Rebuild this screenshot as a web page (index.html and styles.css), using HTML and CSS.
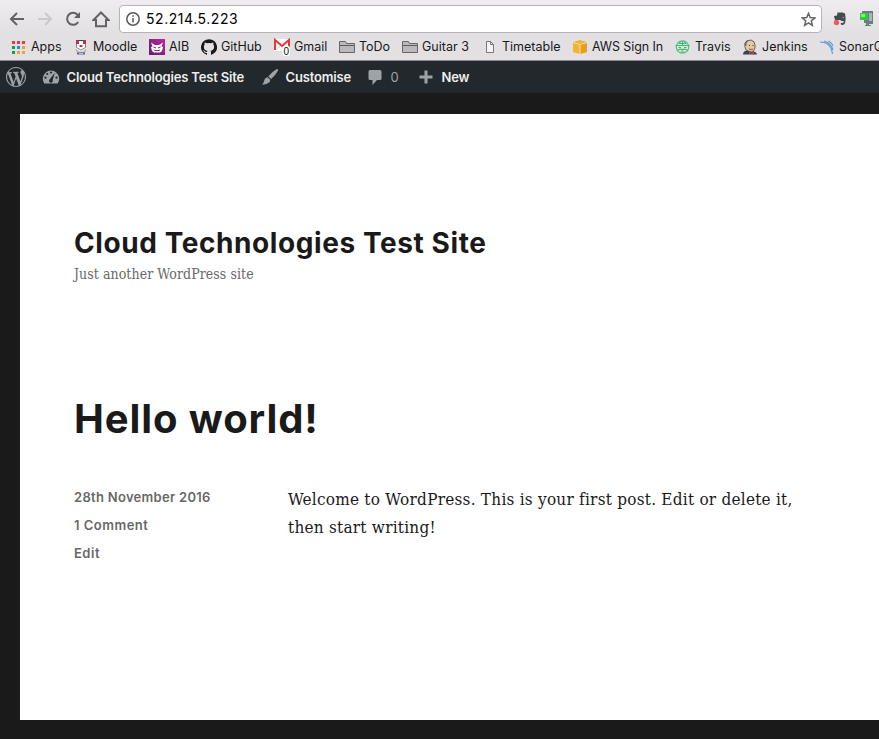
FILE: index.html
```html
<!DOCTYPE html>
<html lang="en">
<head>
<meta charset="utf-8">
<title>Cloud Technologies Test Site</title>
<link rel="stylesheet" href="styles.css">
</head>
<body>
<header class="browser">
  <div class="toolbar">
    <svg class="nav" viewBox="0 0 18 18"><path d="M16 9H3M9 3L3 9l6 6"/></svg>
    <svg class="nav nav-off" viewBox="0 0 18 18"><path d="M2 9h13M9 3l6 6-6 6"/></svg>
    <svg class="nav" viewBox="0 0 18 18"><path d="M14.2 12a6 6 0 1 1-.7-7.3L15 6.200"/><path class="solid" d="M16 2v6h-6z"/></svg>
    <svg class="nav" viewBox="0 0 18 18"><path d="M1.500 10L9 2.500l7.500 7.500H14v6.200H4V10z"/></svg>
    <div class="address">
      <svg class="info" viewBox="0 0 14 14"><circle cx="7" cy="7" r="6.200"/><path d="M7 6v4.500M7 3.300v1.500"/></svg>
      <span class="url">52.214.5.223</span>
      <svg class="star" viewBox="0 0 14 14"><path d="M7 1.200l1.600 4 4.300.3-3.300 2.800 1 4.200L7 10.200l-3.600 2.300 1-4.200L1.100 5.500l4.300-.3z"/></svg>
    </div>
    <svg class="ext" viewBox="0 0 16 16"><path fill="#414c50" d="M5.500 1.500h5l2.500 1q1 4 .3 8.500-.5 3.500-4 3l-.7-2 3-.3V10H9.500L8 9H3L2 5l3-.5z"/><path fill="#9ba2a4" d="M10.500 6h1.500v1h-1.500z"/><circle cx="4.500" cy="11.500" r="2.700" fill="#f05a5e"/></svg>
    <svg class="ext" viewBox="0 0 16 16"><path fill="#6c7e83" d="M4 0h11v13h-4v1h2v1H7v-1h1v-2H6V9H4z"/><path fill="#a7b5b7" d="M11 2h3v8h-3z"/><path fill="#36c83c" d="M2 2h8v7H2z"/><path fill="#8bea79" d="M3 3h4v3H3z"/></svg>
  </div>
  <nav class="bookmarks">
    <a><svg viewBox="0 0 16 16"><path fill="#ed3b3b" d="M1 2h3v3H1zM6 2h3v3H6zM11 2h3v3h-3z"/><path fill="#149c59" d="M1 7h3v3H1zM1 12h3v3H1z"/><path fill="#2a86ec" d="M6 7h3v3H6z"/><path fill="#f0a13a" d="M11 7h3v3h-3zM6 12h3v3H6zM11 12h3v3h-3z"/></svg><span>Apps</span></a>
    <a><svg viewBox="0 0 16 16"><path fill="#b93242" d="M3 1h10v4H3z"/><path fill="#243f75" d="M6 1h4v1H6z"/><path fill="#fff" d="M6 2h4v3H6zM3 5h10v4l-5 3-5-3z"/><path fill="none" stroke="#7c8796" d="M3.500 5v3.500L8 11l4.500-2.500V5"/><path fill="#b93242" d="M6.500 6h3v2h-3z"/><path fill="none" stroke="#b9a58c" stroke-width="1.300" d="M3 10.500l2 3h6l2-3"/><path fill="#586b98" d="M4 13.500h8v2H4z"/><path fill="#e4e6ee" d="M6 14h4v.7H6z"/></svg><span>Moodle</span></a>
    <a><svg viewBox="0 0 16 16"><defs><linearGradient id="aib" x2="1" y1="1"><stop stop-color="#5b206c"/><stop offset="1" stop-color="#c2259f"/></linearGradient></defs><path fill="url(#aib)" d="M0 0h16v16H0z"/><path fill="#fff" d="M2 3.500l4 2.500h4l4-2.500-1.500 4 1.500.5-1 4-2 1.500H5L3 12 2 8l1.500-.5z"/><path fill="none" stroke="#84217f" d="M4.500 8l2.500 1M11.500 8L9 9M5 11l2 .700h2l2-.7"/></svg><span>AIB</span></a>
    <a><svg viewBox="0 0 16 16"><path fill="#191717" d="M8 .2a8 8 0 0 0-2.500 15.600c.4.1.500-.2.500-.4v-1.500c-2.200.5-2.700-.9-2.700-.9-.4-.9-.9-1.200-.9-1.200-.7-.5.1-.5.1-.5.800.1 1.200.8 1.200.8.7 1.200 1.900.9 2.300.7.1-.5.300-.9.5-1.100-1.800-.2-3.600-.9-3.600-4 0-.9.300-1.600.8-2.100-.1-.2-.4-1 .1-2.100 0 0 .7-.2 2.200.8a7.700 7.700 0 0 1 4 0c1.500-1 2.200-.8 2.200-.8.4 1.100.2 1.900.1 2.100.5.6.8 1.300.8 2.100 0 3.100-1.900 3.800-3.700 4 .3.3.6.8.6 1.500v2.200c0 .2.100.5.6.4A8 8 0 0 0 8 .2z"/></svg><span>GitHub</span></a>
    <a><svg class="gmail" viewBox="0 0 16 16"><path fill="#fafafa" d="M0 0h16v12H0z"/><path fill="none" stroke="#d9bdbd" stroke-width=".7" d="M2 11l5-5M14 11L9 6"/><path fill="none" stroke="#e0393b" stroke-width="2" d="M1 11V1l7 6 7-6v10"/><rect x="8.500" y="7" width="7.500" height="10" rx="2" fill="#fff"/><text x="9.500" y="15.500" class="count">0</text></svg><span>Gmail</span></a>
    <a><svg viewBox="0 0 16 16"><path class="folder" d="M.5 13.500v-11h6l1 2h8v9z"/><path stroke="#5d5b5e" d="M1 6.500h14"/></svg><span>ToDo</span></a>
    <a><svg viewBox="0 0 16 16"><path class="folder" d="M.5 13.500v-11h6l1 2h8v9z"/><path stroke="#5d5b5e" d="M1 6.500h14"/></svg><span>Guitar 3</span></a>
    <a><svg viewBox="0 0 16 16"><path fill="#f5f4f5" stroke="#777" d="M4.500 2.500h4l3 3v8h-7zM8.500 2.500v3h3"/></svg><span>Timetable</span></a>
    <a><svg viewBox="0 0 16 16"><path fill="#f4b32c" d="M1 3l7-2 7 2v10l-7 2-7-2z"/><path fill="#e99d20" d="M8 5.500l7-2V13l-7 2z"/><path fill="none" stroke="#fbe3ad" d="M1 3.500l7 2 7-2M8 6v9"/></svg><span class="w-aws">AWS Sign In</span></a>
    <a><svg viewBox="0 0 16 16"><circle cx="7.500" cy="8" r="6.200" fill="#d5eadc" stroke="#5bbd86" stroke-width="1.200"/><path fill="none" stroke="#43b477" stroke-width="1.100" d="M.5 6.500h14M3.500 4.500h8M7.500 2v4M5 2.500v2M10 2.500v2M3.500 8.500H6M9 8.500h2.500M2.500 11.500q3-2.500 5-.5 2-2 5 .5M5.500 13h4"/></svg><span>Travis</span></a>
    <a><svg viewBox="0 0 16 16"><path fill="#2f4856" d="M1 15.500q0-4 5-4l6 1q3 1 3 3z"/><path fill="#e3c7a7" stroke="#4d4745" stroke-width=".8" d="M4 11Q2 7 3 4q2-3 6-3 4 1 4 5v3q-1 4-4 4z"/><path fill="#6e625b" d="M2.500 6Q3 1 7 1L4.500 4v3z"/><path fill="#443a36" d="M7 6h1v1H7zM10.500 6h1v1h-1z"/><path stroke="#594a43" stroke-width=".8" fill="none" d="M7 10q2 1 4 0"/><path fill="#d43835" d="M7 12.500l2 1 3-1v3l-3-1-2 1z"/></svg><span>Jenkins</span></a>
    <a><svg viewBox="0 0 16 16"><path fill="none" stroke="#5b9bd0" stroke-width="1.100" d="M1 3q11 0 12.500 12M5 2q7 2 9 9M9.500 2q3.500 2 4.500 5"/></svg><span>SonarQube</span></a>
  </nav>
</header>
<nav class="adminbar">
  <svg class="wp" viewBox="0 0 20 20"><path fill="#9ea3a8" d="M20 10c0-5.510-4.490-10-10-10C4.480 0 0 4.490 0 10c0 5.520 4.480 10 10 10 5.510 0 10-4.480 10-10zM7.780 15.370L4.370 6.220c.55-.02 1.170-.08 1.170-.08.500-.06.440-1.130-.06-1.110 0 0-1.450.11-2.370.11-.18 0-.37 0-.58-.01C4.120 2.690 6.870 1.110 10 1.110c2.330 0 4.450.87 6.050 2.340-.68-.11-1.650.39-1.650 1.580 0 .74.450 1.360.9 2.100.35.61.550 1.360.550 2.460 0 1.490-1.400 5-1.400 5l-3.030-8.370c.54-.02.820-.17.820-.17.500-.05.440-1.250-.06-1.220 0 0-1.440.12-2.380.12-.87 0-2.330-.12-2.330-.12-.5-.03-.56 1.200-.06 1.220l.92.080 1.260 3.410zM17.410 10c.24-.64.740-1.870.430-4.250.7 1.290 1.050 2.710 1.050 4.250 0 3.290-1.730 6.240-4.400 7.780.97-2.590 1.940-5.200 2.920-7.780zM6.100 18.090C3.120 16.650 1.110 13.530 1.110 10c0-1.300.23-2.480.72-3.590C3.250 10.300 4.670 14.200 6.100 18.090zm4.030-6.630l2.580 6.980c-.86.290-1.760.45-2.710.45-.79 0-1.570-.11-2.290-.33.810-2.380 1.620-4.740 2.420-7.100z"/></svg>
  <span class="item"><svg viewBox="0 0 18 18"><path fill="#9ea3a8" d="M2.300 15.500A8.200 8.200 0 1 1 15.700 15.500z"/><g fill="#23282d"><circle cx="9" cy="4.500" r="1.100"/><circle cx="5.300" cy="6" r="1.100"/><circle cx="3.500" cy="9.700" r="1.100"/><circle cx="14.500" cy="9.700" r="1.100"/><path d="M12.800 4.800L10.700 12a1.900 1.900 0 1 1-2.700-.9z"/></g></svg><span>Cloud Technologies Test Site</span></span>
  <span class="item"><svg viewBox="0 0 18 18"><path fill="#9ea3a8" d="M16.800 1.200q.7.6-.2 2-2.500 4.500-6.400 7.700L7.300 8.500Q11.500 3.500 15 1.600q1.200-.9 1.800-.4zM6.500 9.300l2.800 2.500q-.1 2.500-2 3.300Q4.500 17 1 16.200q1.800-.9 2-3 .7-3.400 3.500-3.900z"/></svg><span>Customise</span></span>
  <span class="item item-comments"><svg viewBox="0 0 18 18"><path fill="#9ea3a8" d="M4 2h10q1.500 0 1.500 1.500v7Q15.500 12 14 12h-3l-4.500 5v-5H4q-1.500 0-1.500-1.500v-7Q2.500 2 4 2z"/></svg><span>0</span></span>
  <span class="item"><svg viewBox="0 0 18 18"><path stroke="#9ea3a8" stroke-width="3" d="M2.500 9h13M9 2.500v13"/></svg><span>New</span></span>
</nav>
<main class="site">
  <header class="branding">
    <h1>Cloud Technologies Test Site</h1>
    <p>Just another WordPress site</p>
  </header>
  <article>
    <h2>Hello world!</h2>
    <div class="entry">
      <aside><span class="m-date">28th November 2016</span><span>1 Comment</span><span>Edit</span></aside>
      <p>Welcome to WordPress. This is your first post. Edit or delete it,<br>then start writing!</p>
    </div>
  </article>
</main>
</body>
</html>
```
FILE: styles.css
```css
* { box-sizing: border-box; }
body { margin: 0; height: 739px; overflow: hidden; background: #1a1a1a; color: #1a1a1a; font-family: Inter, "Liberation Sans", sans-serif; }
svg { display: block; flex: none; }
h1, h2, p { margin: 0; }

.browser { height: 61px; overflow: hidden; border-bottom: 1px solid #8c898c; background: linear-gradient(#eeecee, #e3e0e3 34px); }
.toolbar { display: flex; align-items: center; height: 33px; padding: 5px 0 0 8px; }
.nav { width: 18px; height: 18px; margin-right: 10px; fill: none; stroke: #636163; stroke-width: 2; }
.nav:nth-of-type(4) { margin-right: 9px; }
.nav-off { stroke: #cbc8cb; }
.solid { fill: #636163; stroke: none; }
.address { display: flex; align-items: center; width: 703px; height: 28px; padding: 0 5px 0 6px; border: 1px solid #b5b3b5; border-radius: 4px; background: #fff; }
.info { width: 14px; height: 14px; fill: none; stroke: #58585a; stroke-width: 1.500; }
.url { flex: 1; padding: 0 0 1px 6px; color: #000; font-size: 14px; letter-spacing: .55px; }
.star { width: 15px; height: 15px; fill: none; stroke: #666; stroke-width: 1.400; }
.ext { width: 16px; height: 16px; margin-left: 10px; }
.bookmarks { display: grid; grid-template-columns: 62px 76px 52px 73px 65px 63px 80px 90px 103px 67px 77px 100px; height: 27px; padding-left: 11px; align-items: center; font-size: 12.500px; color: #19181a; }
.bookmarks a { display: flex; align-items: center; gap: 4px; white-space: nowrap; }
.bookmarks svg { width: 16px; height: 16px; }
.bookmarks .gmail { overflow: visible; }
.w-aws { letter-spacing: -.1px; }
.count { font: 10px "Liberation Sans", sans-serif; fill: #111; }
.folder { fill: #bab8bb; stroke: #68666a; }

.adminbar { display: grid; grid-template-columns: 36px 219px 105px 51px 100px; height: 32px; padding-left: 6px; align-items: center; background: #23282d; color: #eee; font-size: 13px; font-weight: 600; letter-spacing: -.16px; white-space: nowrap; }
.wp { width: 20px; height: 20px; }
.item { display: flex; align-items: center; gap: 6.500px; }
.item svg { width: 18px; height: 18px; }
.item-comments { color: #9ea3a8; font-weight: 400; }

.site { height: 606px; margin: 21px 0 0 20px; padding: 110px 0 0 54px; background: #fff; }
.branding { height: 166px; }
h1 { font-size: 28px; line-height: 38px; font-weight: 700; letter-spacing: .58px; white-space: nowrap; }
.branding p { color: #686868; font: 14px/24px "DejaVu Serif Condensed", "DejaVu Serif", serif; font-stretch: condensed; letter-spacing: .06px; }
h2 { height: 84px; font-size: 40px; line-height: 58px; font-weight: 700; letter-spacing: .9px; white-space: nowrap; }
.entry { display: grid; grid-template-columns: 214px 560px; margin-top: 9px; }
aside { display: flex; flex-direction: column; align-items: flex-start; color: #686868; font-size: 13px; line-height: 28px; font-weight: 600; letter-spacing: .5px; }
.m-date { letter-spacing: .3px; }
.entry p { font: 17px/28px "DejaVu Serif Condensed", "DejaVu Serif", serif; font-stretch: condensed; letter-spacing: .24px; margin-top: 2px; white-space: nowrap; }
```
